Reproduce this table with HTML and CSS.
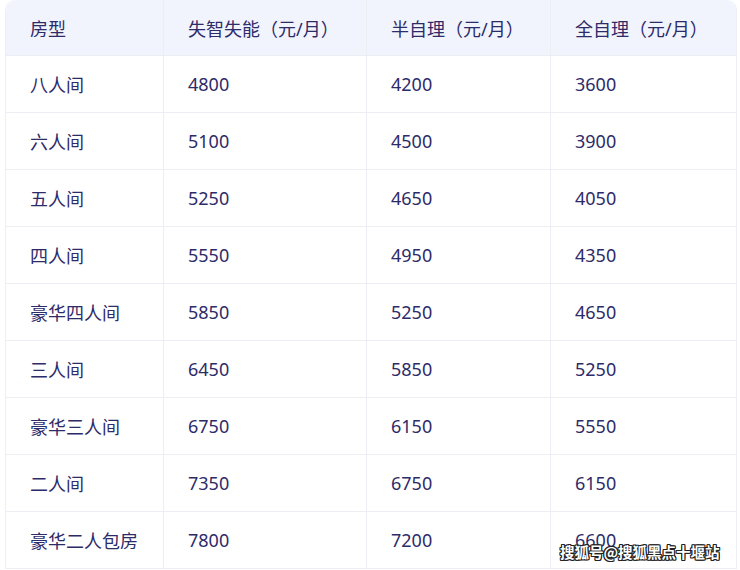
FILE: index.html
```
<!DOCTYPE html>
<html lang="zh">
<head>
<meta charset="utf-8">
<link rel="stylesheet" href="styles.css">
</head>
<body>
<div class="wrap">
<table class="price">
<colgroup><col class="c1"><col class="c2"><col class="c3"><col class="c4"></colgroup>
<thead>
<tr><th>房型</th><th>失智失能（元/月）</th><th>半自理（元/月）</th><th>全自理（元/月）</th></tr>
</thead>
<tbody>
<tr><td>八人间</td><td>4800</td><td>4200</td><td>3600</td></tr>
<tr><td>六人间</td><td>5100</td><td>4500</td><td>3900</td></tr>
<tr><td>五人间</td><td>5250</td><td>4650</td><td>4050</td></tr>
<tr><td>四人间</td><td>5550</td><td>4950</td><td>4350</td></tr>
<tr><td>豪华四人间</td><td>5850</td><td>5250</td><td>4650</td></tr>
<tr><td>三人间</td><td>6450</td><td>5850</td><td>5250</td></tr>
<tr><td>豪华三人间</td><td>6750</td><td>6150</td><td>5550</td></tr>
<tr><td>二人间</td><td>7350</td><td>6750</td><td>6150</td></tr>
<tr><td>豪华二人包房</td><td>7800</td><td>7200</td><td>6600</td></tr>
</tbody>
</table>
<div class="watermark">搜狐号@搜狐黑点十堰站</div>
</div>
</body>
</html>
```
FILE: styles.css
```
html, body { margin: 0; padding: 0; background: #fff; }
.wrap { position: relative; width: 740px; height: 570px; overflow: hidden; }
.price {
  margin-left: 5px;
  width: 730px;
  table-layout: fixed;
  border-collapse: separate;
  border-spacing: 0;
  font-family: "Noto Sans", "Noto Sans CJK SC", sans-serif;
  font-size: 18px;
  color: #2e2b69;
  border-left: 1px solid #eceef4;
  border-right: 1px solid #eceef4;
  border-radius: 10px 10px 0 0;
  overflow: hidden;
}
.c1 { width: 157px; }
.c2 { width: 203px; }
.c3 { width: 184px; }
.c4 { width: 186px; }
.price th, .price td {
  text-align: left;
  padding: 0 0 0 24px;
  font-weight: 400;
  border-bottom: 1px solid #eceef4;
  border-left: 1px solid #eceef4;
  white-space: nowrap;
}
.price th:first-child, .price td:first-child { border-left: none; }
.price th { height: 55px; background: #f1f4fd; }
.price td { height: 56px; background: #fff; }
.price th:first-child { border-top-left-radius: 10px; }
.price th:last-child { border-top-right-radius: 10px; }
.watermark {
  position: absolute;
  left: 560px;
  top: 542px;
  white-space: nowrap;
  font-family: "Noto Sans CJK SC", sans-serif;
  font-size: 14.5px;
  line-height: 20px;
  font-weight: 700;
  color: #fff;
  text-shadow: 1px 0 0 #222, -1px 0 0 #222, 0 1px 0 #222, 0 -1px 0 #222, 1px 1px 0 #222, -1px -1px 0 #222, 1px -1px 0 #222, -1px 1px 0 #222;
}
```
